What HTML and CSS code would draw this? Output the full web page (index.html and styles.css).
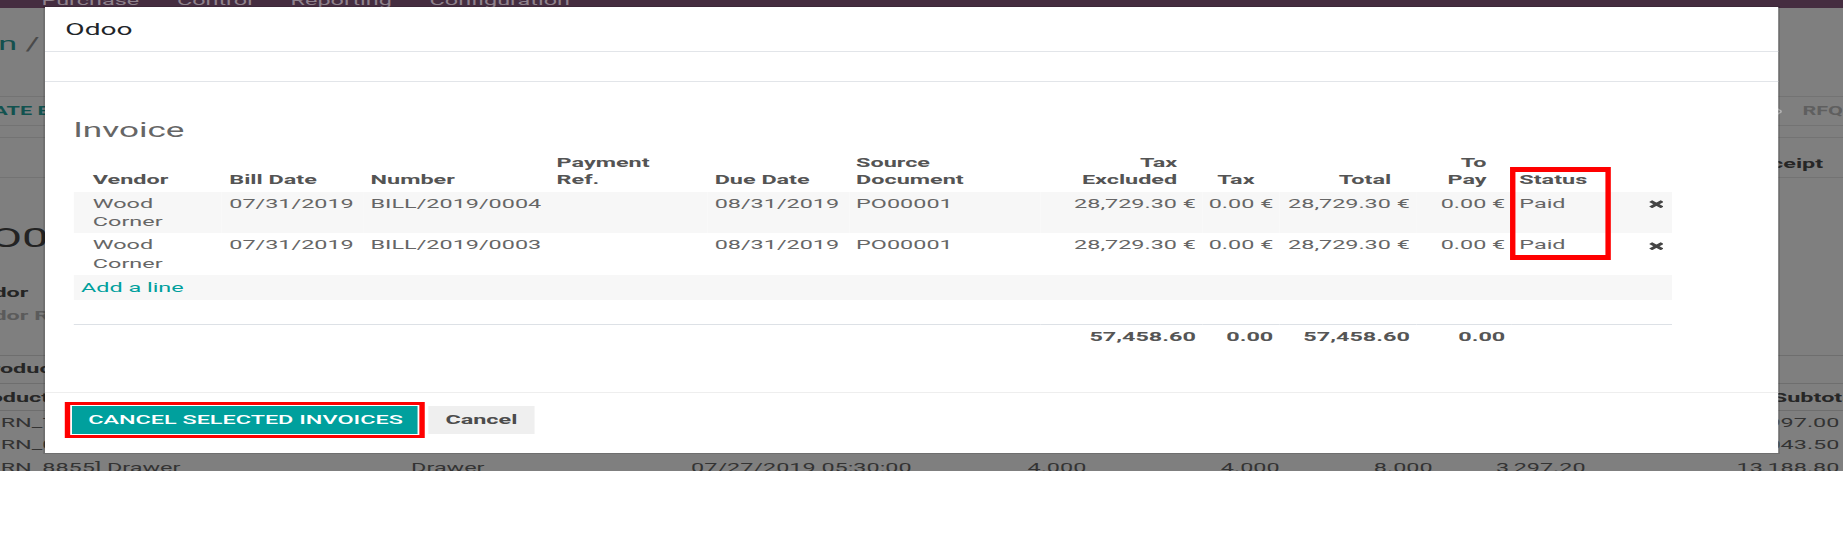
FILE: index.html
```html
<!DOCTYPE html>
<html lang="en">
<head>
<meta charset="utf-8">
<title>Odoo - Cancel selected invoices</title>
<link rel="stylesheet" href="styles.css">
</head>
<body>
<div class="stage">
  <header class="navbar">
    <nav class="menu">
      <a href="#">Purchase</a><a href="#">Control</a><a href="#">Reporting</a><a href="#">Configuration</a>
    </nav>
  </header>

  <section class="cp">
    <div class="crumbs">
      <span class="crumb-clip"><a class="crumb" href="#">Requests for Quotation</a></span>
      <span class="crumb-sep">/</span>
      <span class="crumb-cur">PO00001</span>
    </div>
  </section>

  <section class="statusbar">
    <div class="sb-buttons"><span class="sb-btn">Create Bill</span></div>
    <div class="sb-states">
      <svg class="chev" viewBox="0 0 7 13" preserveAspectRatio="none" aria-hidden="true"><polyline points="0.6,0.5 6.3,6.5 0.6,12.5"/></svg>
      <span class="state">RFQ</span>
    </div>
  </section>

  <div class="sheet-gap"></div>
  <div class="smart-row"><span class="smart">Receipt</span></div>
  <h1 class="po-title">PO00001</h1>
  <div class="field field-first">Vendor</div>
  <div class="field field-muted">Vendor Reference</div>
  <div class="tabs"><span class="tab">Products</span></div>

  <table class="lines">
    <colgroup>
      <col class="lc-product"><col class="lc-desc"><col class="lc-date"><col class="lc-qty">
      <col class="lc-recv"><col class="lc-billed"><col class="lc-price"><col class="lc-sub">
    </colgroup>
    <thead>
      <tr>
        <th>Product</th><th>Description</th><th>Scheduled Date</th><th class="num">Quantity</th>
        <th class="num">Received</th><th class="num">Billed</th><th class="num">Unit Price</th><th class="num last">Subtotal</th>
      </tr>
    </thead>
    <tbody>
      <tr>
        <td>[FURN_7777] Office Chair</td><td>Office Chair</td><td>07/27/2019 05:30:00</td><td class="num">10.000</td>
        <td class="num">10.000</td><td class="num">20.000</td><td class="num">1,299.70</td><td class="num last">12,997.00</td>
      </tr>
      <tr>
        <td>[FURN_0269] Office Chair Black</td><td>Office Chair Black</td><td>07/27/2019 05:30:00</td><td class="num">2.000</td>
        <td class="num">2.000</td><td class="num">4.000</td><td class="num">1,521.75</td><td class="num last">3,043.50</td>
      </tr>
      <tr>
        <td>[FURN_8855] Drawer</td><td>Drawer</td><td>07/27/2019 05:30:00</td><td class="num">4.000</td>
        <td class="num">4.000</td><td class="num">8.000</td><td class="num">3,297.20</td><td class="num last">13,188.80</td>
      </tr>
    </tbody>
  </table>

  <div class="modal" role="dialog" aria-label="Odoo">
    <div class="modal-header"><h4 class="modal-title">Odoo</h4></div>
    <div class="modal-status"></div>
    <div class="modal-body">
      <h3 class="inv-title">Invoice</h3>
      <div class="list-wrap">
        <table class="list">
          <colgroup>
            <col class="col-vendor"><col class="col-date"><col class="col-number"><col class="col-ref">
            <col class="col-due"><col class="col-source"><col class="col-untaxed"><col class="col-tax">
            <col class="col-total"><col class="col-topay"><col class="col-status"><col class="col-del">
          </colgroup>
          <thead>
            <tr>
              <th class="first">Vendor</th>
              <th>Bill Date</th>
              <th>Number</th>
              <th>Payment Ref.</th>
              <th>Due Date</th>
              <th>Source Document</th>
              <th class="num">Tax Excluded</th>
              <th class="num">Tax</th>
              <th class="num">Total</th>
              <th class="num">To Pay</th>
              <th>Status</th>
              <th></th>
            </tr>
          </thead>
          <tbody>
            <tr class="odd">
              <td class="first">Wood Corner</td>
              <td class="nowrap">07/31/2019</td>
              <td class="nowrap">BILL/2019/0004</td>
              <td></td>
              <td class="nowrap">08/31/2019</td>
              <td class="nowrap">PO00001</td>
              <td class="num">28,729.30 €</td>
              <td class="num">0.00 €</td>
              <td class="num">28,729.30 €</td>
              <td class="num">0.00 €</td>
              <td>Paid</td>
              <td class="del"><svg class="del-icon" viewBox="0 0 10 10" preserveAspectRatio="none" aria-hidden="true"><path d="M1.3 1.3 L8.7 8.7 M8.7 1.3 L1.3 8.7"/></svg></td>
            </tr>
            <tr>
              <td class="first">Wood Corner</td>
              <td class="nowrap">07/31/2019</td>
              <td class="nowrap">BILL/2019/0003</td>
              <td></td>
              <td class="nowrap">08/31/2019</td>
              <td class="nowrap">PO00001</td>
              <td class="num">28,729.30 €</td>
              <td class="num">0.00 €</td>
              <td class="num">28,729.30 €</td>
              <td class="num">0.00 €</td>
              <td>Paid</td>
              <td class="del"><svg class="del-icon" viewBox="0 0 10 10" preserveAspectRatio="none" aria-hidden="true"><path d="M1.3 1.3 L8.7 8.7 M8.7 1.3 L1.3 8.7"/></svg></td>
            </tr>
            <tr class="odd">
              <td class="add" colspan="12"><a href="#">Add a line</a></td>
            </tr>
            <tr class="filler">
              <td colspan="12"></td>
            </tr>
          </tbody>
          <tfoot>
            <tr>
              <td colspan="6"></td>
              <td class="num">57,458.60</td>
              <td class="num">0.00</td>
              <td class="num">57,458.60</td>
              <td class="num">0.00</td>
              <td colspan="2"></td>
            </tr>
          </tfoot>
        </table>
        <div class="status-mark" aria-hidden="true"></div>
      </div>
    </div>
    <div class="modal-footer">
      <button class="btn btn-primary" type="button">Cancel Selected Invoices</button>
      <button class="btn btn-secondary" type="button">Cancel</button>
    </div>
  </div>
</div>
</body>
</html>
```

FILE: styles.css
```css
html, body {
  margin: 0;
  padding: 0;
  background: #ffffff;
  overflow: hidden;
}

body {
  font-family: Roboto, "Noto Sans", "Liberation Sans", sans-serif;
  font-size: 13px;
  line-height: 16px;
}

a {
  text-decoration: none;
}

/* The captured screen is a 1024px wide page stretched to 1843px */
.stage {
  position: relative;
  width: 1024px;
  height: 471px;
  overflow: hidden;
  background: #7f7f7f;
  color: #333333;
  transform: scaleX(1.7998);
  transform-origin: 0 0;
}

/* ---------- page behind the dialog (dimmed) ---------- */
.navbar {
  height: 8px;
  overflow: hidden;
  background: #452d40;
}

.menu {
  display: flex;
  margin-top: -6.93px;
  padding-left: 12.5px;
  white-space: nowrap;
}

.menu a {
  padding: 0 10.5px;
  color: #8f828c;
}

.cp {
  height: 88px;
  border-bottom: 1px solid #737373;
}

.crumbs {
  display: flex;
  align-items: baseline;
  padding-top: 23.53px;
  font-size: 19px;
  line-height: 24px;
  white-space: nowrap;
}

/* the first crumb runs off the left edge of the window */
.crumb-clip {
  display: block;
  flex: 0 0 9.5px;
  width: 9.5px;
  min-width: 0;
  direction: rtl;
}

.crumb {
  color: #14504e;
  unicode-bidi: isolate;
  direction: ltr;
}

.crumb-sep {
  margin-left: 4.7px;
  color: #4a4a4a;
}

.crumb-cur {
  margin-left: 4.7px;
  color: #333333;
}

.statusbar {
  height: 28px;
  border-bottom: 1px solid #737373;
  display: flex;
  font-size: 12px;
  font-weight: bold;
  white-space: nowrap;
}

.sb-btn {
  display: block;
  margin-left: -26px;
  padding-top: 5.9px;
  color: #12524f;
  text-transform: uppercase;
}

.sb-states {
  display: flex;
  flex: 0 0 44px;
  margin-left: auto;
}

.chev {
  flex: none;
  width: 6.7px;
  height: 13px;
  margin: 8px 0 0 6.8px;
  fill: none;
  stroke: #b3b3b3;
  stroke-width: 1.3;
}

.state {
  margin-left: 11.1px;
  padding-top: 5.9px;
  color: #5f5f5f;
}

.sheet-gap {
  height: 11.3px;
  border-bottom: 1px solid #737373;
}

.smart-row {
  height: 39px;
  border-bottom: 1px solid #737373;
  display: flex;
  justify-content: flex-end;
}

.smart {
  padding-top: 18.1px;
  margin-right: 11px;
  font-weight: bold;
  color: #262626;
}

.po-title {
  margin: 43.6px 0 0 -22px;
  font-size: 26px;
  line-height: 32px;
  font-weight: normal;
  color: #232323;
  white-space: nowrap;
}

.field {
  margin-left: -26.2px;
  font-weight: bold;
  color: #242424;
  white-space: nowrap;
}

.field-first {
  margin-top: 30.67px;
}

.field-muted {
  margin-top: 7px;
  color: #5b5b5b;
}

.tabs {
  margin-top: 31.43px;
  border-top: 1px solid #6e6e6e;
  padding: 4.57px 0 6.43px;
  white-space: nowrap;
}

.tab {
  display: block;
  margin-left: -13px;
  font-weight: bold;
  color: #262626;
}

.lines {
  margin-left: -22px;
  width: 1058px;
  table-layout: fixed;
  border-collapse: separate;
  border-spacing: 0;
  color: #333333;
  white-space: nowrap;
}

.lc-product { width: 247.1px; }
.lc-desc { width: 155.6px; }
.lc-date { width: 159.3px; }
.lc-qty { width: 66.9px; }
.lc-recv { width: 107.4px; }
.lc-billed { width: 85px; }
.lc-price { width: 85px; }
.lc-sub { width: 151.7px; }

.lines th {
  border-top: 1px solid #6e6e6e;
  border-bottom: 1px solid #6e6e6e;
  padding: 5.57px 3.3px 4.43px;
  text-align: left;
  font-weight: bold;
  color: #262626;
}

.lines td {
  padding: 3.57px 3.3px 3.43px;
}

.lines .num {
  text-align: right;
}

.lines th.last {
  padding-right: 2px;
}

.lines td.last {
  padding-right: 14px;
}

/* ---------- dialog ---------- */
.modal {
  position: absolute;
  left: 24.8px;
  top: 7px;
  width: 963.2px;
  height: 445.7px;
  display: flex;
  flex-direction: column;
  background: #ffffff;
  color: #666666;
  box-shadow: 0 0 0 1px rgba(0, 0, 0, 0.12);
}

.modal-header {
  flex: none;
  padding: 12.7px 11.5px 11px;
  border-bottom: 1px solid #e2e5e9;
}

.modal-title {
  margin: 0;
  font-size: 15.6px;
  line-height: 20px;
  font-weight: normal;
  color: #212529;
}

.modal-status {
  flex: none;
  height: 29.3px;
  border-bottom: 1px solid #e2e5e9;
}

.modal-body {
  flex: 1;
  padding: 36.95px 0 0 15.9px;
}

.inv-title {
  margin: 0;
  font-size: 19.5px;
  line-height: 23.4px;
  font-weight: normal;
  color: #666666;
}

.list-wrap {
  position: relative;
  width: 888.1px;
  margin-top: 8.05px;
}

.list {
  width: 888.1px;
  table-layout: fixed;
  border-collapse: separate;
  border-spacing: 0;
  color: #666666;
}

.col-vendor { width: 82.8px; }
.col-date { width: 78.5px; }
.col-number { width: 103.4px; }
.col-ref { width: 87.8px; }
.col-due { width: 78.6px; }
.col-source { width: 106.6px; }
.col-untaxed { width: 90px; }
.col-tax { width: 43px; }
.col-total { width: 75.9px; }
.col-topay { width: 53px; }
.col-status { width: 59.7px; }
.col-del { width: 28.8px; }

.list th {
  vertical-align: bottom;
  padding: 3.65px 14.3px 3.65px 3.9px;
  line-height: 17px;
  text-align: left;
  font-weight: bold;
  color: #545454;
}

.list th.num {
  text-align: right;
}

.list td {
  vertical-align: top;
  padding: 2.9px 3.9px 1.9px;
  line-height: 18.4px;
}

.list .first {
  padding-left: 10.9px;
}

.list td.num {
  padding-left: 2px;
  text-align: right;
  white-space: nowrap;
}

.list .nowrap {
  white-space: nowrap;
}

.list tbody tr.odd td {
  background: #f7f7f7;
}

.list td.add {
  padding: 3.7px 4.3px 2.9px;
}

.list td.add a {
  color: #00a09d;
}

.list tr.filler td {
  height: 24px;
  padding: 0;
}

.list tfoot td {
  border-top: 1px solid #dde1e6;
  font-weight: bold;
  color: #555555;
}

.list td.del {
  padding: 0 4.3px 0 0;
}

.del-icon {
  display: block;
  width: 8.7px;
  height: 8.5px;
  margin: 8.3px 0 0 auto;
  fill: none;
  stroke: #454545;
  stroke-width: 2.7;
}

.status-mark {
  position: absolute;
  left: 798.7px;
  top: 16.3px;
  width: 55.9px;
  height: 93.3px;
  box-sizing: border-box;
  border-style: solid;
  border-color: #ff0000;
  border-width: 5px 3.7px;
  pointer-events: none;
}

.modal-footer {
  flex: none;
  display: flex;
  gap: 6px;
  padding: 13.3px 15.6px 18.4px;
  border-top: 1px solid #eeeeee;
}

.btn {
  box-sizing: border-box;
  height: 28.3px;
  margin: 0;
  border: 0;
  padding: 0;
  font: inherit;
  line-height: 28.3px;
  text-align: center;
  white-space: nowrap;
  cursor: pointer;
}

.btn-primary {
  width: 192px;
  background: #00a09d;
  color: #ffffff;
  font-weight: 500;
  text-transform: uppercase;
  outline: 3.4px solid #ff0000;
  outline-offset: 1px;
}

.btn-secondary {
  width: 58.2px;
  background: #efefef;
  color: #4c4c4c;
  font-weight: bold;
}
```
